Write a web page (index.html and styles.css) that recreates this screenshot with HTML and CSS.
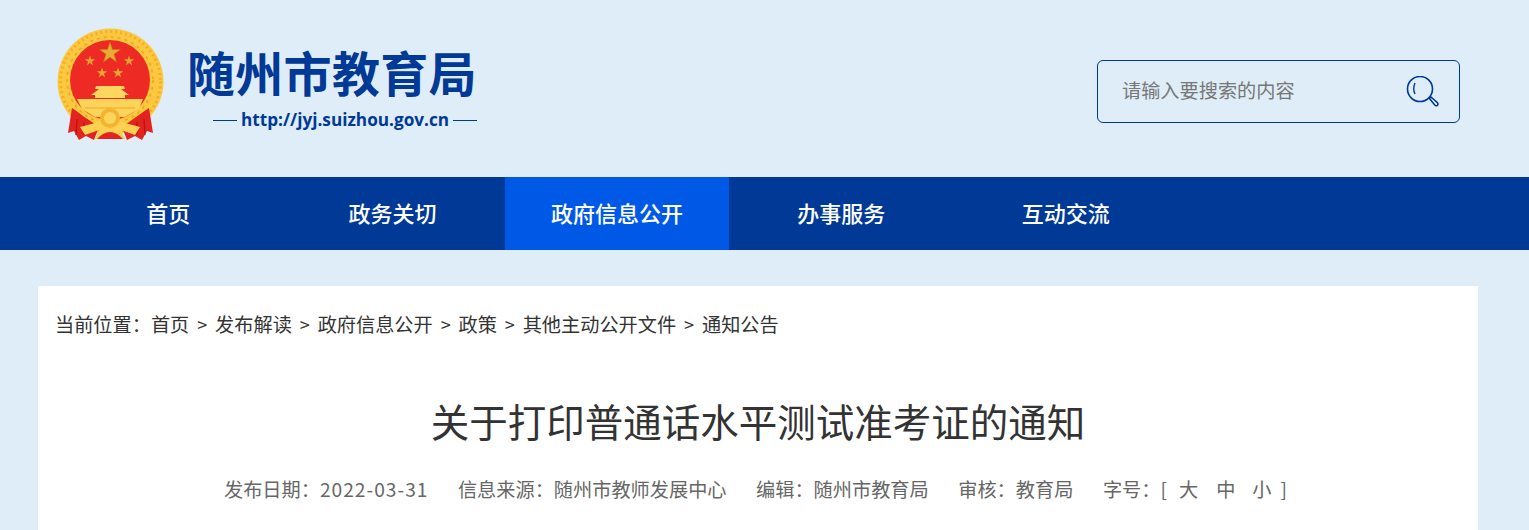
FILE: index.html
```html
<!DOCTYPE html>
<html lang="zh-CN">
<head>
  <meta charset="utf-8">
  <title>关于打印普通话水平测试准考证的通知 - 随州市教育局</title>
  <link rel="stylesheet" href="styles.css">
</head>
<body>
  <header class="header">
    <div class="logo">
      <svg class="emblem" viewBox="0 0 110 114" width="110" height="114">
        <defs>
          <polygon id="star" points="0,-1 .225,-.309 .951,-.309 .363,.118 .588,.809 0,.382 -.588,.809 -.363,.118 -.951,-.309 -.225,-.309"/>
        </defs>
        <!-- wheat ring -->
        <circle cx="55.500" cy="54.500" r="53" fill="#fcc83e"/>
        <circle cx="55.500" cy="54.500" r="50" fill="none" stroke="#f2ad2b" stroke-width="3" stroke-dasharray="2 3"/>
        <!-- drapes -->
        <path d="M17 81 L13 106 L19 104 L24 113 L31 109 L39 113 L44 100 L30 90 Z" fill="#e3231f"/>
        <path d="M94 81 L98 106 L92 104 L87 113 L80 109 L72 113 L67 100 L81 90 Z" fill="#e3231f"/>
        <path d="M22 92 L21 108 M29 95 L29 108 M89 92 L90 108 M82 95 L82 108" stroke="#b5140f" stroke-width="1.200"/>
        <circle cx="55" cy="53" r="45" fill="#fcc83e"/>
        <circle cx="55" cy="53" r="43" fill="none" stroke="#eba326" stroke-width="1.500" stroke-dasharray="3 4"/>
        <circle cx="55" cy="53" r="40" fill="#ee2a25"/>
        <!-- stars -->
        <use href="#star" transform="translate(55 26) scale(11)" fill="#e9ac33" stroke="#b9781a" stroke-width=".05"/>
        <use href="#star" transform="translate(35 34) scale(5.500)" fill="#dfa030"/>
        <use href="#star" transform="translate(74 34) scale(5.500)" fill="#dfa030"/>
        <use href="#star" transform="translate(47 46) scale(5.500)" fill="#e6a92f"/>
        <use href="#star" transform="translate(63 46) scale(5.500)" fill="#e6a92f"/>
        <!-- gate -->
        <path d="M41 59 H69 L70 62 H66 L74 68 H70 V71 H40 V68 H36 L44 62 H40 Z" fill="#fbd760"/>
        <path d="M22 72 H88 L84 82 L70 90 H40 L27 82 Z" fill="#fdd45a"/>
        <path d="M30 81 H80" stroke="#eda92c" stroke-width="1"/>
        <!-- gear and ribbon -->
        <path d="M25 100 L40 96 Q55 84 70 96 L85 100 L80 108 L66 103 L70 112 H40 L44 103 L30 108 Z" fill="#fcd050"/>
        <circle cx="55" cy="91" r="10" fill="#f3b431"/>
        <circle cx="55" cy="91" r="6" fill="#fbd45c"/>
        <path d="M42 112 Q55 98 68 112 Z" fill="#e3231f"/>
      </svg>
      <div class="logo-text">
        <div class="logo-name">随州市教育局</div>
        <div class="logo-url"><span class="dash"></span>http://jyj.suizhou.gov.cn<span class="dash"></span></div>
      </div>
    </div>
    <div class="search">
      <span class="search-hint">请输入要搜索的内容</span>
      <svg class="search-icon" viewBox="0 0 34 34" width="34" height="34" fill="none" stroke="#003a96">
        <circle cx="14" cy="13" r="12.500" stroke-width="1.600"/>
        <path d="M9 7 Q6.500 13 9 18" stroke-width="1.400"/>
        <path d="M23.500 22.500 L25 21 L31.500 26.800 Q32.500 28 31.500 29.300 Q30 30.300 29 29.300 Z" stroke-width="1.600" fill="#fff"/>
      </svg>
    </div>
  </header>

  <nav class="nav">
    <a class="nav-item">首页</a>
    <a class="nav-item">政务关切</a>
    <a class="nav-item active">政府信息公开</a>
    <a class="nav-item">办事服务</a>
    <a class="nav-item">互动交流</a>
  </nav>

  <main class="card">
    <div class="crumbs">当前位置：<span>首页</span><i>&gt;</i><span>发布解读</span><i>&gt;</i><span>政府信息公开</span><i>&gt;</i><span>政策</span><i>&gt;</i><span>其他主动公开文件</span><i>&gt;</i><span>通知公告</span></div>
    <h1 class="title">关于打印普通话水平测试准考证的通知</h1>
    <div class="meta">
      <span>发布日期：<span class="date">2022-03-31</span></span>
      <span>信息来源：随州市教师发展中心</span>
      <span>编辑：随州市教育局</span>
      <span>审核：教育局</span>
      <span class="size">字号：<b class="open">[</b><b class="big">大</b><b class="mid">中</b><b>小</b><b class="close">]</b></span>
    </div>
  </main>
</body>
</html>
```

FILE: styles.css
```css
html, body { margin: 0; height: 530px; overflow: hidden; }
body { background: #dfedf8; font-family: "Noto Sans CJK SC", "Noto Sans", sans-serif; color: #333; }

.header { height: 177px; display: flex; justify-content: space-between; align-items: flex-start; padding: 0 69px 0 55px; box-sizing: border-box; }
.logo { display: flex; margin-top: 27px; }
.emblem { display: block; flex: none; }
.logo-text { margin-left: 22px; color: #003a96; }
.logo-name { font-size: 48px; font-weight: 700; line-height: 58px; margin-top: 15px; white-space: nowrap; letter-spacing: .3px; }
.logo-url { font-family: "Open Sans", sans-serif; font-size: 17.200px; font-weight: 700; line-height: 22px; margin-top: 9px; margin-left: 22px; display: flex; align-items: center; white-space: nowrap; }
.dash { width: 24px; height: 1px; background: #003a96; margin: 0 4px; }

.search { width: 363px; height: 63px; margin-top: 60px; border: 1px solid #003a96; border-radius: 6px; box-sizing: border-box; display: flex; align-items: center; justify-content: space-between; padding: 0 19px 0 24px; }
.search-hint { font-size: 19.200px; color: #777; margin-bottom: 4px; }
.search-icon { display: block; margin-top: 2px; }

.nav { height: 73px; background: #003a96; display: flex; padding-left: 56px; }
.nav-item { width: 224.400px; color: #fff; font-size: 22px; font-weight: 500; line-height: 71px; text-align: center; }
.nav-item.active { background: #0059e6; }

.card { margin: 36px 51px 0 38px; background: #fff; height: 400px; padding: 0 17px; box-sizing: border-box; }
.crumbs { font-size: 19.200px; line-height: 28px; padding-top: 24px; color: #333; white-space: nowrap; }
.crumbs i { font-style: normal; margin: 0 7.900px; font-size: 18px; }
.title { font-size: 38.500px; font-weight: 400; line-height: 52px; margin: 56px 0 0; text-align: center; color: #333; }
.meta { display: flex; justify-content: center; gap: 29.500px; font-size: 19.200px; line-height: 28px; margin-top: 29px; padding-right: 5px; color: #666; white-space: nowrap; }
.date { letter-spacing: 1px; }
.size b { font-weight: 400; margin-right: 20px; }
.size b.open { margin-right: 12px; }
.size b.big { margin-right: 18px; }
.size b.mid { margin-right: 17px; }
.size b.close { margin-right: 0; margin-left: -11px; }
```
